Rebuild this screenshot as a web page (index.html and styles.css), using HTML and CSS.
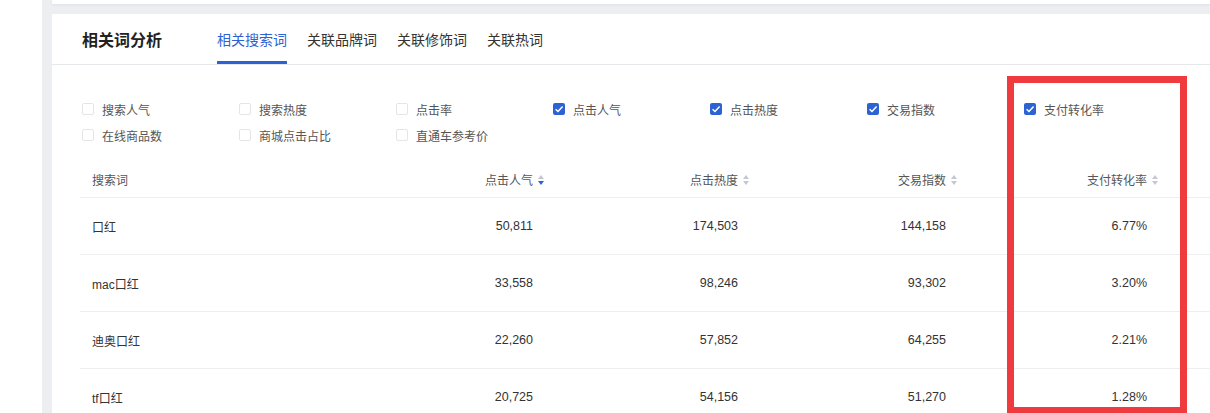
FILE: index.html
```html
<!DOCTYPE html>
<html lang="zh">
<head>
<meta charset="utf-8">
<link rel="stylesheet" href="styles.css">
</head>
<body>
<div class="page">
  <div class="side"></div>
  <div class="main">
    <div class="top-card"></div>
    <div class="card">
      <div class="card-head">
        <div class="title">相关词分析</div>
        <div class="tabs">
          <div class="tab active">相关搜索词</div>
          <div class="tab">关联品牌词</div>
          <div class="tab">关联修饰词</div>
          <div class="tab">关联热词</div>
        </div>
      </div>
      <div class="filters">
        <label class="opt"><span class="cb"></span>搜索人气</label>
        <label class="opt"><span class="cb"></span>搜索热度</label>
        <label class="opt"><span class="cb"></span>点击率</label>
        <label class="opt"><span class="cb on"><svg viewBox="0 0 12 12"><path d="M2.6 6.2 L5 8.5 L9.6 3.6" fill="none" stroke="#fff" stroke-width="1.5"/></svg></span>点击人气</label>
        <label class="opt"><span class="cb on"><svg viewBox="0 0 12 12"><path d="M2.6 6.2 L5 8.5 L9.6 3.6" fill="none" stroke="#fff" stroke-width="1.5"/></svg></span>点击热度</label>
        <label class="opt"><span class="cb on"><svg viewBox="0 0 12 12"><path d="M2.6 6.2 L5 8.5 L9.6 3.6" fill="none" stroke="#fff" stroke-width="1.5"/></svg></span>交易指数</label>
        <label class="opt"><span class="cb on"><svg viewBox="0 0 12 12"><path d="M2.6 6.2 L5 8.5 L9.6 3.6" fill="none" stroke="#fff" stroke-width="1.5"/></svg></span>支付转化率</label>
        <label class="opt"><span class="cb"></span>在线商品数</label>
        <label class="opt"><span class="cb"></span>商城点击占比</label>
        <label class="opt"><span class="cb"></span>直通车参考价</label>
      </div>
      <div class="table">
        <div class="row head">
          <div class="c first">搜索词</div>
          <div class="c num">点击人气<span class="sort"><i class="up"></i><i class="down act"></i></span></div>
          <div class="c num">点击热度<span class="sort"><i class="up"></i><i class="down"></i></span></div>
          <div class="c num">交易指数<span class="sort"><i class="up"></i><i class="down"></i></span></div>
          <div class="c num">支付转化率<span class="sort"><i class="up"></i><i class="down"></i></span></div>
          <div class="c"></div>
        </div>
        <div class="row">
          <div class="c first">口红</div>
          <div class="c num">50,811</div>
          <div class="c num">174,503</div>
          <div class="c num">144,158</div>
          <div class="c num">6.77%</div>
          <div class="c"></div>
        </div>
        <div class="row">
          <div class="c first">mac口红</div>
          <div class="c num">33,558</div>
          <div class="c num">98,246</div>
          <div class="c num">93,302</div>
          <div class="c num">3.20%</div>
          <div class="c"></div>
        </div>
        <div class="row">
          <div class="c first">迪奥口红</div>
          <div class="c num">22,260</div>
          <div class="c num">57,852</div>
          <div class="c num">64,255</div>
          <div class="c num">2.21%</div>
          <div class="c"></div>
        </div>
        <div class="row">
          <div class="c first">tf口红</div>
          <div class="c num">20,725</div>
          <div class="c num">54,156</div>
          <div class="c num">51,270</div>
          <div class="c num">1.28%</div>
          <div class="c"></div>
        </div>
      </div>
    </div>
  </div>
  <div class="highlight"></div>
</div>
</body>
</html>
```

FILE: styles.css
```css
* { box-sizing: border-box; }
html, body { margin: 0; padding: 0; }
body {
  width: 1210px;
  height: 413px;
  overflow: hidden;
  background: #fff;
  font-family: "Liberation Sans", "Noto Sans CJK SC", sans-serif;
  color: #333;
}
.page {
  position: relative;
  display: flex;
  height: 413px;
  overflow: hidden;
}
.side {
  width: 42px;
  flex: none;
  background: #fff;
}
.main {
  flex: 1;
  background: #eceef2;
  padding-left: 10px;
  display: flex;
  flex-direction: column;
  gap: 10px;
  overflow: hidden;
}
.top-card {
  flex: none;
  height: 4px;
  background: #fff;
  box-shadow: 0 1px 3px rgba(0,0,0,0.06);
}
.card {
  flex: none;
  background: #fff;
  padding-bottom: 40px;
}
.card-head {
  height: 51px;
  display: flex;
  align-items: center;
  padding-left: 30px;
  border-bottom: 1px solid #e6e8eb;
}
.title {
  font-size: 16px;
  font-weight: bold;
  color: #222;
  width: 135px;
}
.tabs {
  display: flex;
  gap: 20px;
  height: 100%;
}
.tab {
  font-size: 14px;
  color: #333;
  height: 100%;
  display: flex;
  align-items: center;
  padding-top: 2px;
  border-bottom: 3px solid transparent;
}
.tab.active {
  color: #2d62d5;
  border-bottom-color: #2d62d5;
}
.filters {
  display: grid;
  grid-template-columns: repeat(7, 157px);
  grid-auto-rows: 26px;
  padding: 31px 0 0 30px;
}
.opt {
  display: flex;
  align-items: center;
  font-size: 12px;
  color: #555;
}
.cb {
  width: 12px;
  height: 12px;
  border: 1px solid #e3e5e8;
  border-radius: 2px;
  margin-right: 8px;
  display: inline-flex;
  flex: none;
}
.cb.on {
  border: none;
  background: #2d62d5;
}
.cb svg { width: 12px; height: 12px; }
.table {
  margin: 12px 0 0 28px;
}
.row {
  display: grid;
  grid-template-columns: 280px 197px 205px 208px 201px 1fr;
  height: 57px;
  border-bottom: 1px solid #edeef0;
  font-size: 12px;
  color: #333;
}
.row.head {
  height: 38px;
  color: #555;
}
.c {
  display: flex;
  align-items: center;
  padding-right: 24px;
}
.c.num { font-size: 12.5px; }
.c.first { padding-left: 12px; }
.c.num { justify-content: flex-end; }
.head .c.num { padding-right: 12px; font-size: 12px; }
.head .c { padding-top: 2px; }
.sort {
  display: inline-flex;
  flex-direction: column;
  gap: 2px;
  margin-left: 5px;
  width: 7px;
}
.sort i {
  display: block;
  width: 0;
  height: 0;
  border-left: 3.5px solid transparent;
  border-right: 3.5px solid transparent;
}
.sort .up { border-bottom: 4px solid #c3c8d0; }
.sort .down { border-top: 4px solid #c3c8d0; }
.sort .down.act { border-top-color: #2d62d5; }
.highlight {
  position: absolute;
  left: 1007px;
  top: 76px;
  width: 180px;
  height: 337px;
  border: 7px solid #ef3a3e;
  border-bottom-width: 6px;
}
```
